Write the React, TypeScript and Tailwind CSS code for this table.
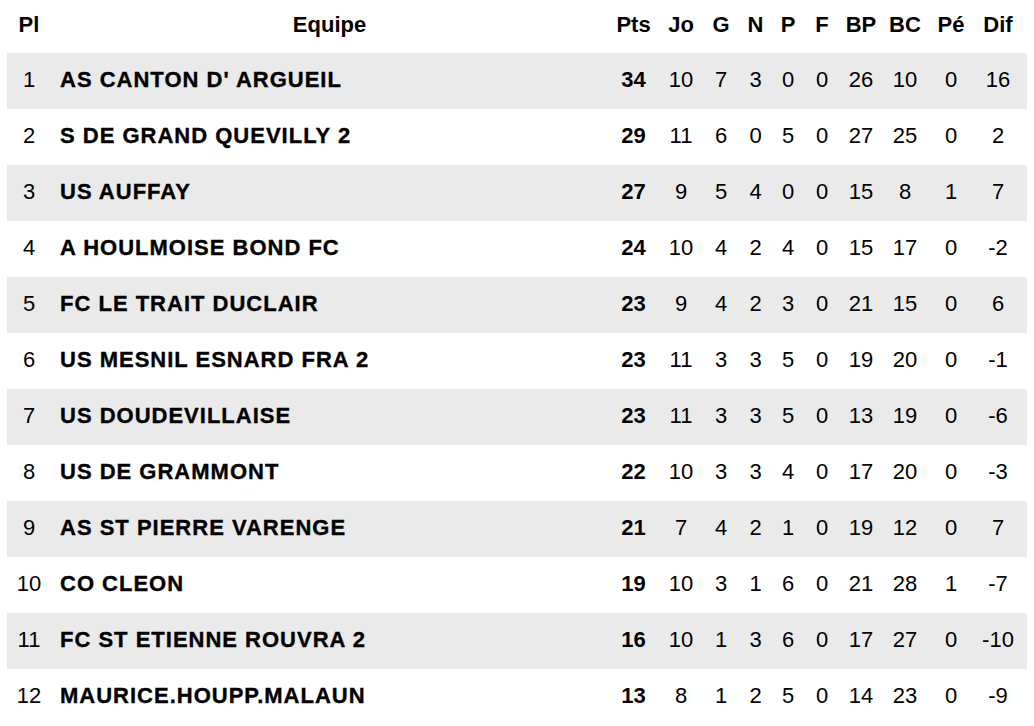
const columns = ["Pts", "Jo", "G", "N", "P", "F", "BP", "BC", "Pé", "Dif"];

const rows: [number, string, number[]][] = [
  [1, "AS CANTON D' ARGUEIL", [34, 10, 7, 3, 0, 0, 26, 10, 0, 16]],
  [2, "S DE GRAND QUEVILLY 2", [29, 11, 6, 0, 5, 0, 27, 25, 0, 2]],
  [3, "US AUFFAY", [27, 9, 5, 4, 0, 0, 15, 8, 1, 7]],
  [4, "A HOULMOISE BOND FC", [24, 10, 4, 2, 4, 0, 15, 17, 0, -2]],
  [5, "FC LE TRAIT DUCLAIR", [23, 9, 4, 2, 3, 0, 21, 15, 0, 6]],
  [6, "US MESNIL ESNARD FRA 2", [23, 11, 3, 3, 5, 0, 19, 20, 0, -1]],
  [7, "US DOUDEVILLAISE", [23, 11, 3, 3, 5, 0, 13, 19, 0, -6]],
  [8, "US DE GRAMMONT", [22, 10, 3, 3, 4, 0, 17, 20, 0, -3]],
  [9, "AS ST PIERRE VARENGE", [21, 7, 4, 2, 1, 0, 19, 12, 0, 7]],
  [10, "CO CLEON", [19, 10, 3, 1, 6, 0, 21, 28, 1, -7]],
  [11, "FC ST ETIENNE ROUVRA 2", [16, 10, 1, 3, 6, 0, 17, 27, 0, -10]],
  [12, "MAURICE.HOUPP.MALAUN", [13, 8, 1, 2, 5, 0, 14, 23, 0, -9]],
];

const grid =
  "grid grid-cols-[44px_557px_51px_44px_36px_33px_32px_36px_42px_46px_46px_48px] items-baseline pr-[5px] leading-none";

export default function App() {
  return (
    <div
      className="w-[1034px] h-[726px] bg-white px-[7px] text-[22px] text-black"
      style={{ fontFamily: '"Liberation Sans", Arial, sans-serif' }}
    >
      <div className={`${grid} h-[53px] pt-[14px] font-bold`}>
        <div className="text-center">Pl</div>
        <div className="text-center">Equipe</div>
        {columns.map((c) => (
          <div key={c} className="text-center">
            {c}
          </div>
        ))}
      </div>
      {rows.map(([pl, team, stats], i) => (
        <div
          key={pl}
          className={`${grid} h-[56px] pt-[16px] ${i % 2 === 0 ? "bg-[#eaeaea]" : "bg-white"}`}
        >
          <div className="text-center">{pl}</div>
          <div className="pl-[9px] font-bold tracking-[1px] [-webkit-text-stroke:0.35px_#000] whitespace-nowrap">
            {team}
          </div>
          {stats.map((v, j) => (
            <div key={j} className={`text-center ${j === 0 ? "font-bold" : ""}`}>
              {v}
            </div>
          ))}
        </div>
      ))}
    </div>
  );
}
